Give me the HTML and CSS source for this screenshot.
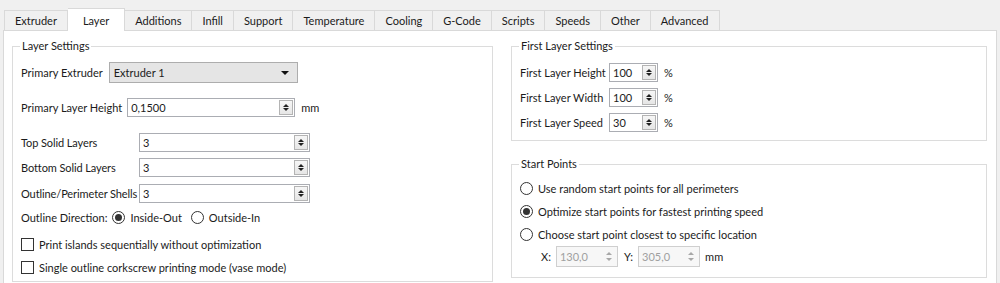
FILE: index.html
```html
<!DOCTYPE html>
<html lang="en">
<head>
    <meta charset="UTF-8">
    <title>Layer Settings</title>
    <link rel="stylesheet" href="styles.css">
</head>
<body>
    <div class="tabs">
        <div class="tab">Extruder</div>
        <div class="tab active">Layer</div>
        <div class="tab">Additions</div>
        <div class="tab">Infill</div>
        <div class="tab">Support</div>
        <div class="tab">Temperature</div>
        <div class="tab">Cooling</div>
        <div class="tab">G-Code</div>
        <div class="tab">Scripts</div>
        <div class="tab">Speeds</div>
        <div class="tab">Other</div>
        <div class="tab">Advanced</div>
    </div>

    <div class="pane">
        <fieldset class="group layer-group">
            <legend>Layer Settings</legend>

            <div class="row row-extruder">
                <span class="label label-gap">Primary Extruder</span>
                <div class="combo">
                    <span>Extruder 1</span>
                    <span class="combo-arrow"></span>
                </div>
            </div>

            <div class="row row-height">
                <span class="label">Primary Layer Height</span>
                <div class="spin spin-height">
                    <span class="spin-value">0,1500</span>
                    <span class="spin-btn"><i class="up"></i><i class="down"></i></span>
                </div>
                <span class="unit">mm</span>
            </div>

            <div class="row row-solid">
                <span class="label label-wide">Top Solid Layers</span>
                <div class="spin spin-wide">
                    <span class="spin-value">3</span>
                    <span class="spin-btn"><i class="up"></i><i class="down"></i></span>
                </div>
            </div>
            <div class="row row-bottom">
                <span class="label label-wide">Bottom Solid Layers</span>
                <div class="spin spin-wide">
                    <span class="spin-value">3</span>
                    <span class="spin-btn"><i class="up"></i><i class="down"></i></span>
                </div>
            </div>
            <div class="row row-shells">
                <span class="label label-wide">Outline/Perimeter Shells</span>
                <div class="spin spin-wide">
                    <span class="spin-value">3</span>
                    <span class="spin-btn"><i class="up"></i><i class="down"></i></span>
                </div>
            </div>

            <div class="row row-direction">
                <span class="label">Outline Direction:</span>
                <span class="radio checked"></span>
                <span class="option">Inside-Out</span>
                <span class="radio"></span>
                <span class="option">Outside-In</span>
            </div>

            <div class="row row-check">
                <span class="checkbox"></span>
                <span>Print islands sequentially without optimization</span>
            </div>
            <div class="row row-check2">
                <span class="checkbox"></span>
                <span>Single outline corkscrew printing mode (vase mode)</span>
            </div>
        </fieldset>

        <div class="right-col">
            <fieldset class="group first-group">
                <legend>First Layer Settings</legend>
                <div class="row row-first">
                    <span class="label label-first">First Layer Height</span>
                    <div class="spin spin-small">
                        <span class="spin-value">100</span>
                        <span class="spin-btn"><i class="up"></i><i class="down"></i></span>
                    </div>
                    <span class="unit">%</span>
                </div>
                <div class="row row-first2">
                    <span class="label label-first">First Layer Width</span>
                    <div class="spin spin-small">
                        <span class="spin-value">100</span>
                        <span class="spin-btn"><i class="up"></i><i class="down"></i></span>
                    </div>
                    <span class="unit">%</span>
                </div>
                <div class="row row-first2">
                    <span class="label label-first">First Layer Speed</span>
                    <div class="spin spin-small">
                        <span class="spin-value">30</span>
                        <span class="spin-btn"><i class="up"></i><i class="down"></i></span>
                    </div>
                    <span class="unit">%</span>
                </div>
            </fieldset>

            <fieldset class="group start-group">
                <legend>Start Points</legend>
                <div class="row row-start">
                    <span class="radio"></span>
                    <span>Use random start points for all perimeters</span>
                </div>
                <div class="row row-start2">
                    <span class="radio checked"></span>
                    <span>Optimize start points for fastest printing speed</span>
                </div>
                <div class="row row-start2">
                    <span class="radio"></span>
                    <span>Choose start point closest to specific location</span>
                </div>
                <div class="row row-xy">
                    <span class="xy-label">X:</span>
                    <div class="spin spin-xy disabled">
                        <span class="spin-value">130,0</span>
                        <span class="spin-btn"><i class="up"></i><i class="down"></i></span>
                    </div>
                    <span class="xy-label">Y:</span>
                    <div class="spin spin-xy disabled">
                        <span class="spin-value">305,0</span>
                        <span class="spin-btn"><i class="up"></i><i class="down"></i></span>
                    </div>
                    <span class="unit">mm</span>
                </div>
            </fieldset>
        </div>
    </div>
</body>
</html>
```

FILE: styles.css
```css
body {
    margin: 0;
    background: #f0f0f0;
    font-family: Lato, "Noto Sans", sans-serif;
    font-size: 11px;
    color: #1b1b1b;
    overflow: hidden;
    white-space: nowrap;
}
.tabs {
    display: flex;
    padding: 10px 0 0 4px;
    height: 20px;
}
.tab {
    height: 20px;
    line-height: 19px;
    padding: 0 10px;
    border: 1px solid #d9d9d9;
    border-bottom: none;
    border-left: none;
    box-sizing: border-box;
    background: #f0f0f0;
}
.tab:first-child {
    border-left: 1px solid #d9d9d9;
}
.tab.active {
    background: #fff;
    height: 23px;
    margin-top: -2px;
    padding: 0 15px;
    line-height: 24px;
    position: relative;
    z-index: 1;
}
.pane {
    background: #fff;
    border: 1px solid #d9d9d9;
    margin: 0 3px 0 3px;
    height: 250px;
    padding: 7px 8px 0 8px;
    display: flex;
    gap: 18px;
}
.group {
    margin: 0;
    border: 1px solid #dcdcdc;
    padding: 0 8px;
    min-width: 0;
}
.group legend {
    padding: 0 2px;
    margin-left: -1px;
    line-height: 16px;
}
.layer-group {
    width: 481px;
    box-sizing: border-box;
    height: 244px;
    flex-shrink: 0;
}
.right-col {
    width: 476px;
    display: flex;
    flex-direction: column;
}
.first-group {
    height: 103px;
    box-sizing: border-box;
}
.start-group {
    margin-top: 15px;
    height: 122px;
    box-sizing: border-box;
}
.row {
    display: flex;
    align-items: center;
}
.row > * {
    flex-shrink: 0;
}
.row-extruder { margin-top: 8px; height: 21px; }
.row-height { margin-top: 15px; height: 19px; }
.row-solid { margin-top: 16px; height: 19px; }
.row-bottom { margin-top: 6px; height: 19px; }
.row-shells { margin-top: 7px; height: 19px; }
.row-direction { margin-top: 4px; height: 20px; }
.row-check { margin-top: 7px; height: 20px; }
.row-check2 { margin-top: 3px; height: 20px; }
.row-first { margin-top: 9px; height: 19px; }
.row-first2 { margin-top: 6px; height: 19px; }
.row-start { margin-top: 6px; height: 20px; }
.row-start2 { margin-top: 3px; height: 20px; }
.row-xy { margin-top: 2px; height: 21px; padding-left: 15px; }

.label {
    margin-right: 5px;
}
.label-gap {
    margin-right: 6px;
}
.label-wide {
    width: 113px;
    letter-spacing: -0.1px;
}
.label-first {
    width: 84px;
}
.combo {
    width: 189px;
    height: 21px;
    box-sizing: border-box;
    background: #e5e5e5;
    border: 1px solid #adadad;
    display: flex;
    align-items: center;
    justify-content: space-between;
    padding: 0 8px 0 4px;
}
.combo-arrow {
    width: 0;
    height: 0;
    border-left: 4px solid transparent;
    border-right: 4px solid transparent;
    border-top: 4px solid #111;
}
.spin {
    height: 19px;
    box-sizing: border-box;
    border: 1px solid #abadb3;
    background: #fff;
    display: flex;
    align-items: center;
    justify-content: space-between;
    padding: 0 1px 0 3px;
}
.spin-height { width: 168px; }
.spin-wide { width: 171px; }
.spin-small { width: 49px; }
.spin-xy { width: 62px; height: 21px; }
.spin-btn {
    width: 14px;
    height: 15px;
    box-sizing: border-box;
    border: 1px solid #b4b4b4;
    background: linear-gradient(#f6f6f6, #e6e6e6);
    display: flex;
    flex-direction: column;
    align-items: center;
    justify-content: space-around;
    padding: 2px 0;
}
.spin-btn i {
    display: block;
    width: 0;
    height: 0;
    border-left: 3px solid transparent;
    border-right: 3px solid transparent;
}
.spin-btn .up {
    border-bottom: 3px solid #222;
}
.spin-btn .down {
    border-top: 3px solid #222;
}
.spin.disabled {
    border-color: #cfcfcf;
    background: #f7f7f7;
    color: #a0a0a0;
}
.spin.disabled .spin-btn {
    border: none;
    background: none;
}
.spin.disabled .up {
    border-bottom-color: #a8a8a8;
}
.spin.disabled .down {
    border-top-color: #a8a8a8;
}
.unit {
    margin-left: 6px;
}
.row-xy .unit {
    margin-left: 5px;
}
.xy-label {
    margin: 0 5px 0 6px;
}
.radio {
    width: 13px;
    height: 13px;
    box-sizing: border-box;
    border: 1px solid #333;
    border-radius: 50%;
    background: #fff;
    margin-right: 5px;
    display: flex;
    align-items: center;
    justify-content: center;
}
.radio.checked::after {
    content: "";
    width: 7px;
    height: 7px;
    border-radius: 50%;
    background: #333;
}
.option {
    margin-right: 9px;
}
.checkbox {
    width: 13px;
    height: 13px;
    box-sizing: border-box;
    border: 1px solid #333;
    background: #fff;
    margin-right: 5px;
}
```
